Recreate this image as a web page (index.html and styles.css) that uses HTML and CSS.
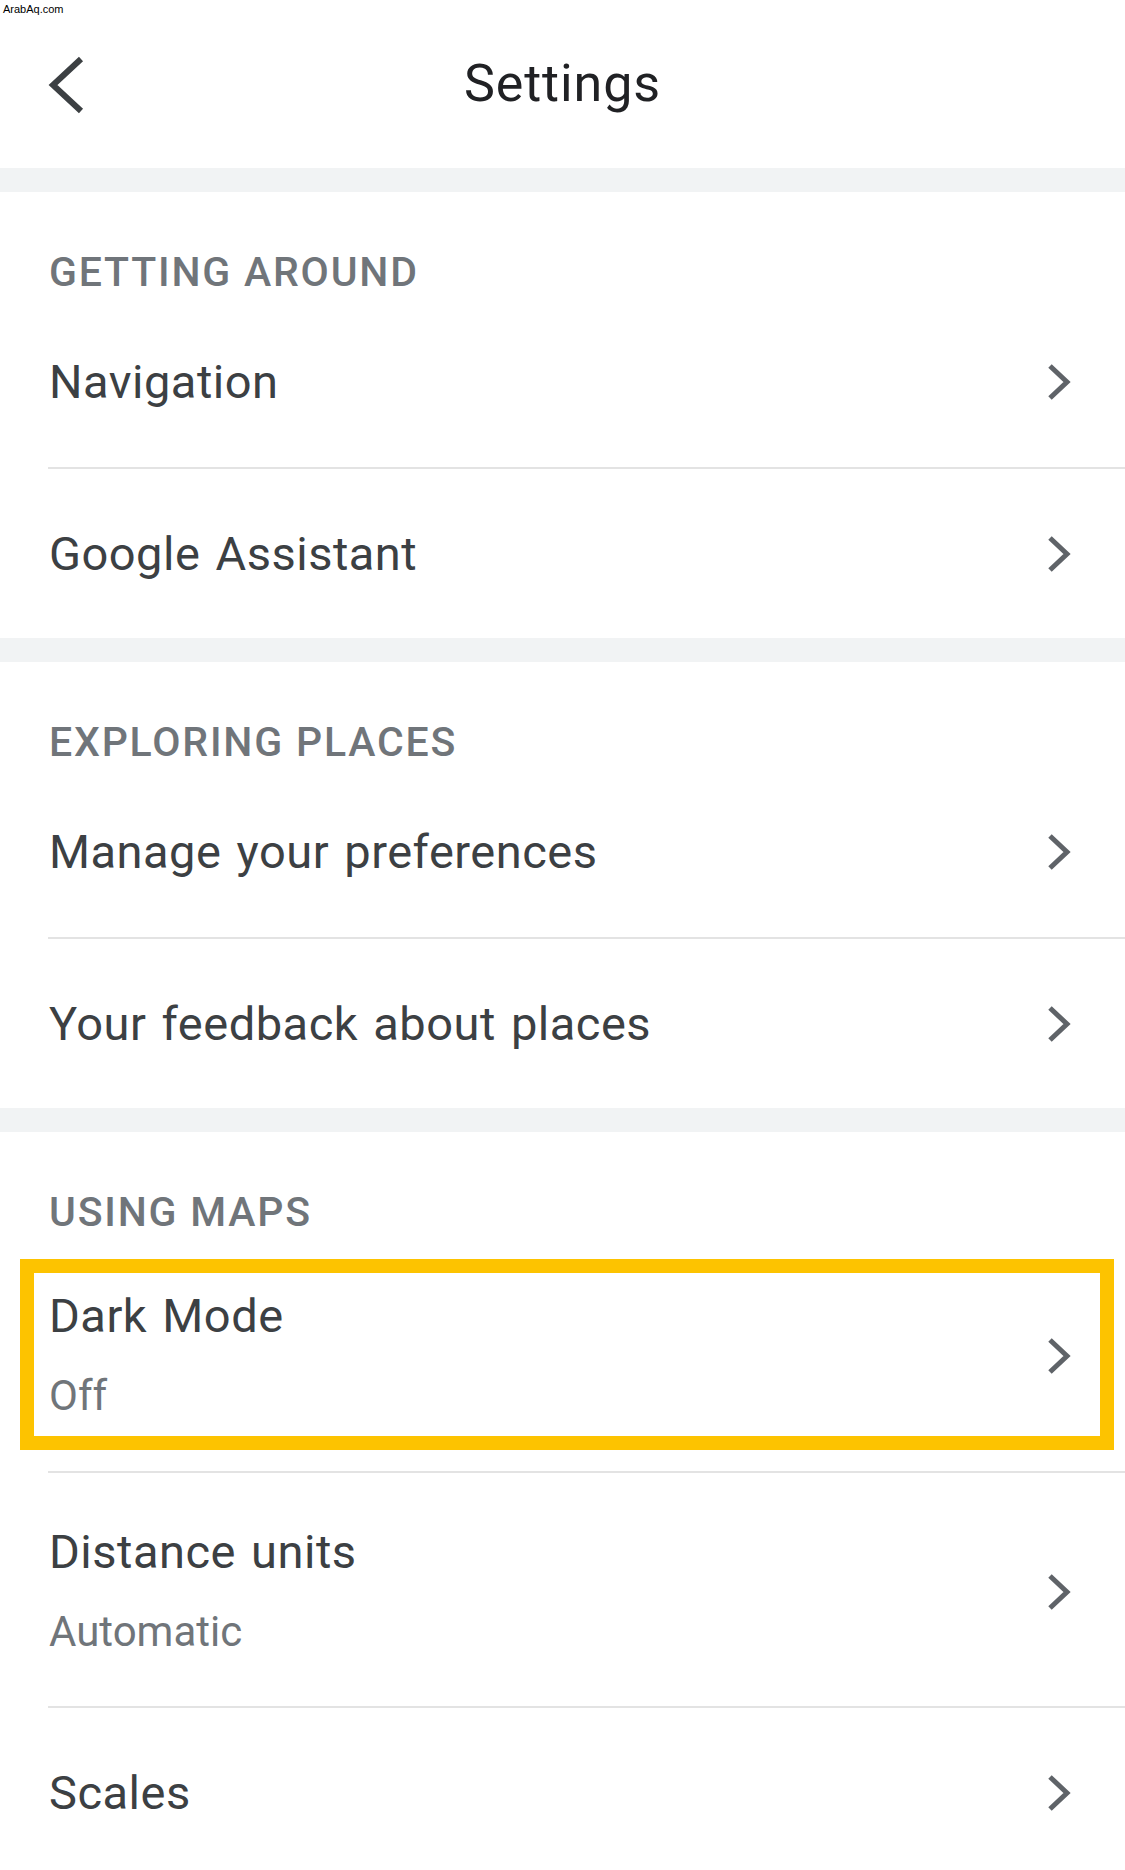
FILE: index.html
```html
<!DOCTYPE html>
<html lang="en">
<head>
<meta charset="utf-8">
<title>Settings</title>
<link rel="stylesheet" href="styles.css">
</head>
<body>
<div class="watermark">ArabAq.com</div>
<header class="topbar">
  <div class="back">
    <svg width="36" height="58" viewBox="0 0 36 58"><polyline points="33,3 5,29 33,55" fill="none" stroke="#3c4043" stroke-width="6"/></svg>
  </div>
  <h1 class="title">Settings</h1>
  <div class="spacer"></div>
</header>

<div class="band"></div>
<section class="section">
  <h2 class="section-head">GETTING AROUND</h2>
  <div class="row"><span class="row-title">Navigation</span><svg class="chev" width="24" height="36" viewBox="0 0 24 36"><polyline points="3,2 20,18 3,34" fill="none" stroke="#5f6368" stroke-width="5"/></svg></div>
  <div class="row"><span class="row-title">Google Assistant</span><svg class="chev" width="24" height="36" viewBox="0 0 24 36"><polyline points="3,2 20,18 3,34" fill="none" stroke="#5f6368" stroke-width="5"/></svg></div>
</section>

<div class="band"></div>
<section class="section">
  <h2 class="section-head">EXPLORING PLACES</h2>
  <div class="row"><span class="row-title">Manage your preferences</span><svg class="chev" width="24" height="36" viewBox="0 0 24 36"><polyline points="3,2 20,18 3,34" fill="none" stroke="#5f6368" stroke-width="5"/></svg></div>
  <div class="row"><span class="row-title">Your feedback about places</span><svg class="chev" width="24" height="36" viewBox="0 0 24 36"><polyline points="3,2 20,18 3,34" fill="none" stroke="#5f6368" stroke-width="5"/></svg></div>
</section>

<div class="band"></div>
<section class="section">
  <h2 class="section-head">USING MAPS</h2>
  <div class="row row-tall">
    <div class="highlight"></div>
    <div class="row-text"><span class="row-title">Dark Mode</span><span class="row-sub">Off</span></div>
    <svg class="chev" width="24" height="36" viewBox="0 0 24 36"><polyline points="3,2 20,18 3,34" fill="none" stroke="#5f6368" stroke-width="5"/></svg>
  </div>
  <div class="row row-tall">
    <div class="row-text"><span class="row-title">Distance units</span><span class="row-sub">Automatic</span></div>
    <svg class="chev" width="24" height="36" viewBox="0 0 24 36"><polyline points="3,2 20,18 3,34" fill="none" stroke="#5f6368" stroke-width="5"/></svg>
  </div>
  <div class="row"><span class="row-title">Scales</span><svg class="chev" width="24" height="36" viewBox="0 0 24 36"><polyline points="3,2 20,18 3,34" fill="none" stroke="#5f6368" stroke-width="5"/></svg></div>
</section>
</body>
</html>
```

FILE: styles.css
```css
html, body {
  margin: 0;
  padding: 0;
  background: #ffffff;
}
body {
  width: 1125px;
  position: relative;
  font-family: Roboto, "Liberation Sans", Arial, sans-serif;
  color: #3c4043;
  overflow: hidden;
}
.watermark {
  position: absolute;
  left: 3px;
  top: 3px;
  font-family: "Liberation Sans", Arial, sans-serif;
  font-size: 11px;
  line-height: 13px;
  color: #000;
}
.topbar {
  height: 168px;
  display: grid;
  grid-template-columns: 1fr auto 1fr;
  align-items: center;
}
.back {
  padding-left: 48px;
  padding-top: 2px;
  display: flex;
  align-items: center;
}
.back svg { display: block; }
.title {
  margin: 0;
  font-size: 52px;
  font-weight: 400;
  line-height: 60px;
  letter-spacing: 0.9px;
  color: #202124;
}
.band {
  height: 24px;
  background: #f1f3f4;
}
.section-head {
  margin: 0;
  height: 104px;
  box-sizing: border-box;
  padding: 56px 0 0 49px;
  font-size: 41px;
  line-height: 48px;
  font-weight: 500;
  letter-spacing: 1.8px;
  color: #70757a;
}
.row {
  position: relative;
  margin-left: 48px;
  padding-left: 1px;
  padding-right: 54px;
  height: 171px;
  box-sizing: border-box;
  display: flex;
  align-items: center;
  justify-content: space-between;
}
.row + .row {
  border-top: 2px solid #e3e3e3;
}
.row-tall {
  height: 235px;
  padding-top: 4px;
}
.row-title {
  font-size: 47px;
  line-height: 60px;
  letter-spacing: 0.5px;
  word-spacing: 3px;
  color: #3c4043;
}
.row-text {
  display: flex;
  flex-direction: column;
}
.row-sub {
  margin-top: 20px;
  font-size: 42px;
  line-height: 60px;
  color: #70757a;
}
.chev {
  display: block;
  flex: none;
}
.highlight {
  position: absolute;
  left: -28px;
  top: 23px;
  width: 1094px;
  height: 191px;
  box-sizing: border-box;
  border: 14px solid #fdc300;
  pointer-events: none;
}
```
